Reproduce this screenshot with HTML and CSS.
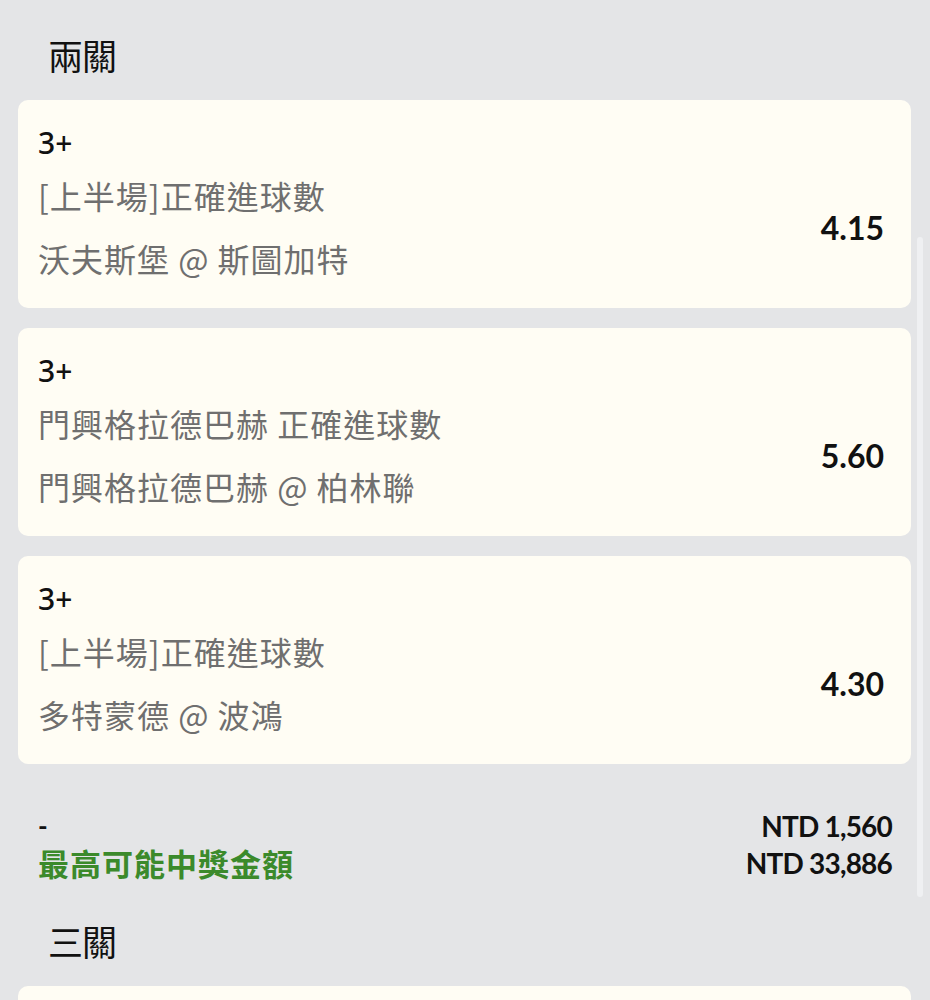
FILE: index.html
```html
<!DOCTYPE html>
<html lang="zh-Hant">
<head>
<meta charset="utf-8">
<title>兩關</title>
<link rel="stylesheet" href="styles.css">
</head>
<body>
<div class="page">
  <section class="group">
    <h2 class="group-title">兩關</h2>
    <div class="cards">
      <div class="card">
        <div class="pick">3+</div>
        <div class="card-body">
          <div class="lines">
            <div class="line">[上半場]正確進球數</div>
            <div class="line">沃夫斯堡 @ 斯圖加特</div>
          </div>
          <div class="odds">4.15</div>
        </div>
      </div>
      <div class="card">
        <div class="pick">3+</div>
        <div class="card-body">
          <div class="lines">
            <div class="line">門興格拉德巴赫 正確進球數</div>
            <div class="line">門興格拉德巴赫 @ 柏林聯</div>
          </div>
          <div class="odds">5.60</div>
        </div>
      </div>
      <div class="card">
        <div class="pick">3+</div>
        <div class="card-body">
          <div class="lines">
            <div class="line">[上半場]正確進球數</div>
            <div class="line">多特蒙德 @ 波鴻</div>
          </div>
          <div class="odds">4.30</div>
        </div>
      </div>
    </div>
    <div class="summary">
      <div class="summary-row">
        <span class="dash">-</span>
        <span class="amount">NTD 1,560</span>
      </div>
      <div class="summary-row">
        <span class="max-label">最高可能中獎金額</span>
        <span class="amount">NTD 33,886</span>
      </div>
    </div>
  </section>
  <section class="group">
    <h2 class="group-title">三關</h2>
    <div class="cards">
      <div class="card card-empty"></div>
    </div>
  </section>
</div>
<div class="scrollbar"></div>
</body>
</html>
```

FILE: styles.css
```css
html, body {
  margin: 0;
  padding: 0;
  background: #e4e5e7;
}
body {
  font-family: "Noto Sans CJK TC", "Noto Sans", sans-serif;
  color: #111;
  overflow: hidden;
  height: 1000px;
}
.page {
  padding: 0 19px 0 18px;
}
.group-title {
  margin: 0 0 20px 0;
  padding: 30px 0 0 30px;
  font-size: 35px;
  line-height: 50px;
  font-weight: 400;
  color: #111;
  letter-spacing: -1px;
}
.cards {
  display: flex;
  flex-direction: column;
  gap: 20px;
}
.card {
  background: #fffdf4;
  border-radius: 10px;
  padding: 25px 27px 18px 20px;
}
.card-empty {
  height: 200px;
}
.pick {
  font-family: "Noto Sans", "Roboto", sans-serif;
  font-size: 30px;
  font-weight: 500;
  line-height: 36px;
  color: #111;
}
.card-body {
  display: flex;
  align-items: center;
  justify-content: space-between;
  margin-top: 3px;
}
.line {
  font-size: 32px;
  line-height: 63px;
  letter-spacing: 1px;
  color: #6f6f6f;
  font-weight: 400;
}
.odds {
  font-family: "Lato", "Liberation Sans", sans-serif;
  font-weight: 700;
  font-size: 32px;
  color: #111;
}
.summary {
  margin-top: 43px;
  padding: 0 19px 5px 20px;
}
.summary-row {
  display: flex;
  justify-content: space-between;
  align-items: center;
  height: 37px;
}
.dash {
  font-family: "Lato", sans-serif;
  font-weight: 700;
  font-size: 26px;
  color: #111;
}
.amount {
  font-family: "Lato", "Liberation Sans", sans-serif;
  font-weight: 700;
  font-size: 28px;
  letter-spacing: -0.8px;
  color: #111;
}
.max-label {
  font-size: 31px;
  font-weight: 700;
  color: #3b8a2b;
  letter-spacing: 1px;
}
.scrollbar {
  position: absolute;
  left: 917px;
  top: 237px;
  width: 6px;
  height: 660px;
  border-radius: 3px;
  background: #eff0f2;
}
```
